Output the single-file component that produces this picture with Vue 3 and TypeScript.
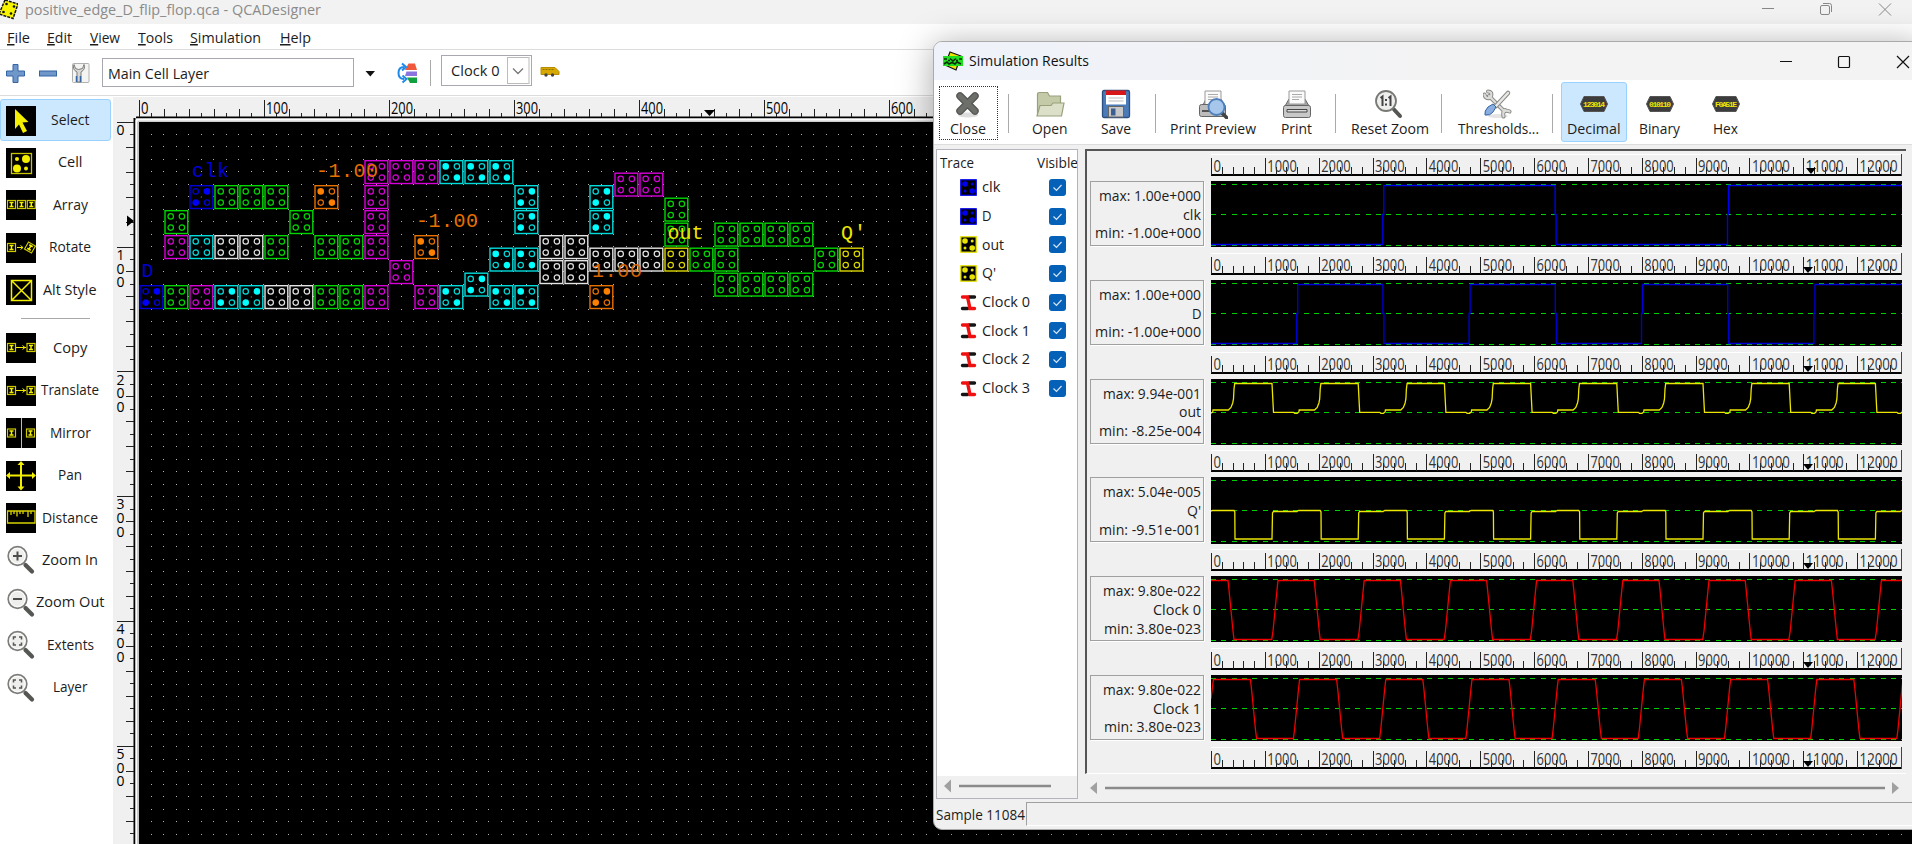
<script setup lang="ts">
import { h } from 'vue'

interface FitProps { t: string; w: number; s?: number; c?: string; u?: boolean }

const Fit = (p: FitProps) =>
  h('svg', { class: 'fit', width: p.w, height: 20 }, [
    h('text', {
      x: 0, y: 15, textLength: p.w, lengthAdjust: 'spacingAndGlyphs',
      fill: p.c || '#1c1c1c', 'font-size': p.s || 15,
    }, p.u ? [h('tspan', { 'text-decoration': 'underline' }, p.t[0]), p.t.slice(1)] : p.t),
  ])
Fit.props = ['t', 'w', 's', 'c', 'u']

const menus = [
  { t: 'File', w: 23, x: 17 }, { t: 'Edit', w: 25, x: 18 }, { t: 'View', w: 30, x: 18 },
  { t: 'Tools', w: 35, x: 17 }, { t: 'Simulation', w: 71, x: 18.5 }, { t: 'Help', w: 31, x: 0 },
]

const Y = '#f4ee00'
const mini = (x: number, y: number) =>
  `<rect x="${x}" y="${y}" width="8" height="8" fill="none" stroke="#cfca00" stroke-width="1.2"/><path d="M${x + 2} ${y + 2}h4M${x + 2} ${y + 6}h4M${x + 4} ${y + 2}v4" stroke="${Y}" stroke-width="1.5"/>`
const sq = (s: string) => `<rect width="30" height="30" fill="#000"/>${s}`
const lens = (s: string) =>
  `<path d="M19.5 20l6.500 6.500" stroke="#555753" stroke-width="4.200" stroke-linecap="round"/><circle cx="11.500" cy="11" r="9.300" fill="#eeeeec" stroke="#7c7e7a" stroke-width="1.700"/><circle cx="11.500" cy="11" r="7.600" fill="none" stroke="#fff"/>${s}`
const corners = '<path d="M7.500 9.500V7h2.500M13 7h2.500v2.500M15.500 12.500V15H13M10 15H7.500v-2.500" fill="none" stroke="#555753" stroke-width="1.500"/>'

const tools = [
  { t: 'Select', w: 38.5, on: true, i: sq(`<path d="M9 3l13.500 13-6 .5 4.500 8.500-4 2-4-8.500-4 4.500z" fill="${Y}"/>`) },
  { t: 'Cell', w: 24.5, i: sq(`<rect x="5.500" y="5.500" width="20" height="20" fill="none" stroke="#c9c400" stroke-width="1.300"/><g fill="${Y}"><circle cx="11" cy="11" r="2"/><circle cx="20" cy="11" r="4"/><circle cx="11" cy="20.500" r="4"/><circle cx="20" cy="20.500" r="2"/></g>`) },
  { t: 'Array', w: 35, i: sq(mini(1.5, 10.5) + mini(11.5, 10.5) + mini(21.3, 10.5)) },
  { t: 'Rotate', w: 42, i: sq(mini(1.5, 10.5) + `<path d="M11 14.500h6M14.500 12.500l2.500 2-2.500 2" stroke="${Y}" fill="none"/><g transform="rotate(30 24 14.500)">${mini(20, 10.5)}</g>`) },
  { t: 'Alt Style', w: 53.5, i: sq(`<path d="M5.500 5.500h20v20h-20zl20 20M25.500 5.500l-20 20" fill="none" stroke="${Y}" stroke-width="1.500"/>`) },
  { t: '', w: 0, sep: true, i: '' },
  { t: 'Copy', w: 34.5, i: sq(mini(1.5, 10.5) + mini(21, 10.5) + `<path d="M10 14.500h10M16.500 12.500l2.500 2-2.500 2" stroke="${Y}" fill="none"/>`) },
  { t: 'Translate', w: 58, i: sq(mini(1.5, 10.5) + mini(21, 10.5) + `<path d="M10 14.500h10M16.500 12.500l2.500 2-2.500 2" stroke="${Y}" fill="none"/>`) },
  { t: 'Mirror', w: 41, i: sq(mini(1.5, 11) + mini(20.5, 11) + `<path d="M15.500 0v30" stroke="#d8d200"/>`) },
  { t: 'Pan', w: 24, i: sq(`<path d="M15 3v24M2 14.500h26" stroke="${Y}" stroke-width="2"/><path d="M15 0l3.500 4h-7zM15 29.500l3.500-4h-7zM0 14.500l4-3.500v7zM30 14.500l-4-3.500v7z" fill="${Y}"/>`) },
  { t: 'Distance', w: 56, i: sq(`<path d="M1.500 8h27.500v12H1.500zM5 8v4M8 8v3M11 8v5.500M14 8v3M17 8v3M22 8v6M25 8v3" fill="none" stroke="#d8d200" stroke-width="1.300"/>`) },
  { t: 'Zoom In', w: 56, i: lens('<path d="M11.500 6.500v9M7 11h9" stroke="#4c4e4a" stroke-width="2"/>') },
  { t: 'Zoom Out', w: 68.5, i: lens('<path d="M7 11h9" stroke="#4c4e4a" stroke-width="2"/>') },
  { t: 'Extents', w: 47, i: lens(corners) },
  { t: 'Layer', w: 34.5, i: lens(corners) },
]

/* Design canvas: cell positions are in half-cell grid units */
const G = '#00d800', M = '#d800d8', C = '#00dcdc', W = '#e4e4e4', O = '#e87000', B = '#0000d8', L = '#dcd800'
type Cell = { x: number; y: number; c: string; p: number }
const row = (y: number, c: string, xs: number[], p = 0): Cell[] => xs.map((x) => ({ x, y, c, p }))
const cells: Cell[] = [
  ...row(3, M, [18, 20, 22]), ...row(3, C, [24, 26, 28], 1),
  ...row(4, M, [38, 40]),
  ...row(5, B, [4], 2), ...row(5, G, [6, 8, 10]), ...row(5, O, [14], 1), ...row(5, M, [18]), ...row(5, C, [30, 36], 2),
  ...row(6, G, [42]),
  ...row(7, G, [2, 12]), ...row(7, M, [18]), ...row(7, C, [30, 36], 2),
  ...row(8, G, [42, 46, 48, 50, 52]),
  ...row(9, M, [2, 18]), ...row(9, C, [4]), ...row(9, W, [6, 8, 32, 34]), ...row(9, G, [10, 14, 16]), ...row(9, O, [22], 1),
  ...row(10, C, [28, 30], 1), ...row(10, W, [36, 38, 40]), ...row(10, L, [42, 56]), ...row(10, G, [44, 46, 54]),
  ...row(11, M, [20]), ...row(11, W, [32, 34]),
  ...row(12, C, [26], 2), ...row(12, G, [46, 48, 50, 52]),
  ...row(13, B, [0], 2), ...row(13, G, [2, 14, 16]), ...row(13, M, [4, 18, 22]), ...row(13, C, [6, 8], 2),
  ...row(13, W, [10, 12]), ...row(13, C, [24, 28, 30], 1), ...row(13, O, [36], 2),
]
const bright: Record<string, string> = { [G]: '#00d800', [M]: '#e000e0', [C]: '#00ffff', [W]: '#fff', [O]: '#ff8000', [B]: '#0000ff', [L]: '#e8e400' }
const quad = [[-5.6, -5.6, 1], [5.6, -5.6, 2], [-5.6, 5.6, 2], [5.6, 5.6, 1]]
const labels = [
  { t: 'clk', x: 53, y: 54.5, c: '#0000d0', w: 37 },
  { t: 'D', x: 2.5, y: 154.5, c: '#0000d0', w: 12 },
  { t: '-1.00', x: 177, y: 54.5, c: '#e87000', w: 62 },
  { t: '-1.00', x: 277, y: 104.5, c: '#e87000', w: 62 },
  { t: '1.00', x: 453, y: 154.5, c: '#d86400', w: 50 },
  { t: 'out', x: 528.5, y: 117, c: '#ece600', w: 36 },
  { t: "Q'", x: 702, y: 117, c: '#ece600', w: 25 },
]
const range = (n: number) => Array.from({ length: n }, (_, i) => i)
const hTicks = range(64).map((i) => ({ x: 26 + i * 12.5, y: i % 10 === 0 ? 3 : i % 2 === 0 ? 12 : 16 }))
const vTicks = range(58).map((i) => ({ y: i * 12.48 + 0.2, x: i % 10 === 0 ? 4 : i % 2 === 0 ? 13 : 17 }))
const vNums = range(6).flatMap((n) => String(n * 100).split('').map((d, k) => ({ d, y: n * 124.8 + 13 + k * 13.7 })))

/* Results window */
const acts = [
  { t: 'Close', w: 36, bw: 59, k: 'focus', i: '<ellipse cx="15" cy="26" rx="10" ry="2.500" fill="#ddd"/><path d="M7 7l15 15M22 7L7 22" stroke="#555753" stroke-width="7.500" stroke-linecap="round"/><path d="M7 7l15 15M22 7L7 22" stroke="#6d6f6b" stroke-width="5" stroke-linecap="round"/>' },
  { sep: 21 },
  { t: 'Open', w: 35.5, bw: 62, i: '<path d="M2.500 26V5.500q0-2 2-2h8l2 3.500h11v19z" fill="#c4caa8" stroke="#98a07c" stroke-width="1.200"/><path d="M2 27l3-10.500h11l2-2.500h11l-2.500 13z" fill="#dce0c8" stroke="#98a07c" stroke-width="1.200"/>' },
  { t: 'Save', w: 30, bw: 70, i: '<rect x="1.500" y="1.500" width="27" height="27" rx="1.500" fill="#4a7ab8" stroke="#2c4f82" stroke-width="1.300"/><rect x="5" y="2" width="20" height="13.500" fill="#fff"/><rect x="5" y="1.500" width="20" height="4.500" fill="#d81818"/><path d="M7.500 9h15M7.500 12h15" stroke="#bbb"/><rect x="7.500" y="17.500" width="15" height="10.500" fill="#c8c8c8" stroke="#666"/><rect x="10" y="19.500" width="4.500" height="7" fill="#3a5f92"/>' },
  { sep: 10 },
  { t: 'Print Preview', w: 86, bw: 105, i: '<path d="M5 16l3-6h15l3 6z" fill="#aaa" stroke="#666"/><path d="M7 2h16v14H7z" fill="#fafafa" stroke="#999"/><path d="M10 5.500h10M10 8h10M10 10.500h7" stroke="#aaa"/><rect x="1.500" y="15.500" width="26" height="12" rx="2" fill="#bdbdbd" stroke="#666"/><path d="M4 22h20" stroke="#555" stroke-width="2"/><path d="M24 24l5 5" stroke="#444" stroke-width="3.500" stroke-linecap="round"/><circle cx="18.500" cy="18" r="8" fill="#a6c6ec" stroke="#4e7fba" stroke-width="1.800"/>' },
  { t: 'Print', w: 31, bw: 62, i: '<path d="M3 17l4-7h16l4 7z" fill="#a5a5a5" stroke="#666"/><path d="M7 2h16v13H7z" fill="#fafafa" stroke="#999"/><path d="M10 5.500h10M10 8h10M10 10.500h7" stroke="#aaa"/><rect x="1.500" y="16.500" width="27" height="12" rx="2" fill="#c8c8c8" stroke="#666"/><path d="M5 20.500h20v2.500H5z" fill="#ddd" stroke="#444"/>' },
  { sep: 16 },
  { t: 'Reset Zoom', w: 78, bw: 92, i: '<g transform="translate(-1 1)"><path d="M20 19.500l6 6.500" stroke="#555753" stroke-width="4" stroke-linecap="round"/><circle cx="12" cy="11" r="10" fill="#eeeeec" stroke="#777975" stroke-width="1.800"/><path d="M6.500 8l2-1.500V16M14.500 8l2-1.500V16M12 9v2M12 13.500v2" fill="none" stroke="#444" stroke-width="2"/></g>' },
  { sep: 12 },
  { t: 'Thresholds...', w: 81, bw: 101, i: '<g transform="translate(-1 0)"><ellipse cx="16" cy="27" rx="10" ry="2" fill="#e4e4e4"/><path d="M7 7l15 15M2.500 5.500q1 4.500 5 3.500M6 2.500q4.500 0 3 5M21.500 27.500q-1-5 1.500-6.500M27.500 22.500q-4-2-6 1" fill="none" stroke="#888a85" stroke-width="4" stroke-linecap="round"/><path d="M7 7l15 15M2.500 5.500q1 4.500 5 3.500M6 2.500q4.500 0 3 5M21.500 27.500q-1-5 1.500-6.500M27.500 22.500q-4-2-6 1" fill="none" stroke="#dcdcda" stroke-width="2.200" stroke-linecap="round"/><path d="M14 17L26 4" stroke="#888a85" stroke-width="4.500" stroke-linecap="round"/><path d="M14 17L26 4" stroke="#e8e8e6" stroke-width="2.500" stroke-linecap="round"/><path d="M3 26q-1-4 3-8l5-3 3 3-3 5q-3 4-8 3z" fill="#8aaee0" stroke="#3465a4"/></g>' },
  { sep: 7 },
  { t: 'Decimal', w: 53.5, bw: 66, k: 'on', n: '123014' },
  { t: 'Binary', w: 41, bw: 66, n: '010110' },
  { t: 'Hex', w: 25, bw: 66, n: 'F0A51E' },
] as { t?: string; w?: number; bw?: number; k?: string; i?: string; n?: string; sep?: number }[]

const traces = [
  { t: 'clk', w: 18.5, c: '#0000f0' }, { t: 'D', w: 9.5, c: '#0000f0' }, { t: 'out', w: 22, c: '#e8e400' }, { t: "Q'", w: 14, c: '#e8e400' },
  { t: 'Clock 0', w: 48, c: '' }, { t: 'Clock 1', w: 48, c: '' }, { t: 'Clock 2', w: 48, c: '' }, { t: 'Clock 3', w: 48, c: '' },
]

const P = 86.2
const square = (xs: number[]) => {
  let hi = false
  let d = 'M0 63.500'
  for (const x of xs) {
    d += `H${x - 0.5}V33.500H${x + 0.5}V${hi ? 63.5 : 4.5}`
    hi = !hi
  }
  return d + 'H691'
}
const repeat = (pts: number[][], pre = '') => {
  let d = pre
  for (let k = 0; k < 9; k++) for (const [x, y] of pts) d += `${d ? 'L' : 'M'}${(x + k * P).toFixed(1)} ${y}`
  return d
}
const outPath = repeat([[0, 34.3], [1.7, 33], [2, 31], [17.3, 31], [20, 28.5], [21.7, 24], [22.5, 20], [23, 10], [23.7, 4.5], [61, 4.5], [61.5, 14], [62, 24], [62.5, 33.3], [82.5, 33.3], [83.7, 34.3]])
const qPath = repeat([[0, 34.3], [1.5, 33.5], [23, 33.5], [23.8, 35], [24, 62], [61, 62], [61.5, 36], [62.5, 34.5], [86, 34.5]])
const c0Path = repeat([[17, 4.5], [18, 14], [22, 55], [23, 63.5], [60.7, 63.5], [62, 55], [66, 14], [67, 4.5]], 'M0 4.500')
const c1Path = repeat([[2.4, 4.5], [39.4, 4.5], [40.5, 14], [44.5, 55], [45.6, 63.5], [82.4, 63.5], [83.5, 55], [87.5, 14]], 'M0 24')

const plots = [
  { max: '1.00e+000', n: 'clk', nw: 18, min: '-1.00e+000', c: '#0000f0', d: square([172.3, 344.6, 517]), w: [102, 106] },
  { max: '1.00e+000', n: 'D', nw: 9.5, min: '-1.00e+000', c: '#0000d8', d: square([1, 2, 3, 4, 5, 6, 7].map((k) => k * P)), w: [102, 106] },
  { max: '9.94e-001', n: 'out', nw: 22, min: '-8.25e-004', c: '#ece600', d: outPath, w: [98, 102] },
  { max: '5.04e-005', n: "Q'", nw: 14, min: '-9.51e-001', c: '#ece600', d: qPath, w: [98, 102] },
  { max: '9.80e-022', n: 'Clock 0', nw: 48, min: '3.80e-023', c: '#f00000', d: c0Path, w: [98, 97] },
  { max: '9.80e-022', n: 'Clock 1', nw: 48, min: '3.80e-023', c: '#f00000', d: c1Path, w: [98, 97] },
]
const rulers = range(7)
const majors = range(13).map((n) => ({ x: n * 53.84 + 0.5, t: String(n * 1000), w: n === 0 ? 7.5 : n < 10 ? 29.5 : 38 }))
const minors = range(65).filter((n) => n % 5 && n < 64).map((n) => n * 10.77 + 0.5)
</script>

<template>
  <div class="app">
    <header class="title">
      <svg class="logo" width="18" height="20" viewBox="0 0 18 20"><path d="M5 0l13 4-5 14.500L-1 14z" fill="#f8f400" stroke="#111" stroke-width="1.500" stroke-dasharray="3 1" /><g fill="#111"><circle cx="6.500" cy="4" r="1.300" /><circle cx="14" cy="6.500" r="1.300" /><circle cx="3.500" cy="12" r="1.300" /><circle cx="11" cy="13.500" r="1.300" /></g></svg>
      <Fit t="positive_edge_D_flip_flop.qca - QCADesigner" :w="296" c="#8b8b8b" />
      <svg class="sys" width="132" height="20" viewBox="0 0 132 20" fill="none" stroke="#888"><path d="M0 8.500h12M117 3.500l12 12M129 3.500l-12 12" /><rect x="58.500" y="5.500" width="9" height="9" rx="1.500" /><path d="M61 3.500h6.500q2 0 2 2V12" /></svg>
    </header>
    <nav class="menu">
      <span v-for="m in menus" :key="m.t" :style="{ marginRight: m.x + 'px' }"><Fit :t="m.t" :w="m.w" :u="true" /></span>
    </nav>
    <div class="bar">
      <svg width="102" height="40" viewBox="0 0 102 40"><path d="M13 11.500h5v6.500h6.500v5H18v6.500h-5V23H6.500v-5H13z" fill="#6f97c9" stroke="#3465a4" /><rect x="39.500" y="18" width="17" height="5" fill="#6f97c9" stroke="#3465a4" /><rect x="72.500" y="10.500" width="16.500" height="19" rx="1" fill="#f4f4f2" stroke="#b0b0ae" /><path d="M74 11.500q-2 5 3 7.500v10h4V19q5-3 3-7.500l-1.500 4-4 1-3-1z" fill="#d8d8d6" stroke="#7c7e7a" /><path d="M76.500 23v6M80.500 23v6" stroke="#3465a4" stroke-width="1.500" /></svg>
      <div class="combo"><Fit t="Main Cell Layer" :w="101" /></div>
      <svg width="76" height="40" viewBox="0 0 76 40"><path d="M11.500 18h9.500l-4.700 5.500z" fill="#111" /><path d="M52.500 18.500h10.500v4.500H51z" fill="#8a74e0" /><path d="M54.500 10.500H61l2 6.500H51z" fill="#f0583c" /><path d="M53 24.500h10v5.500H56z" fill="#10a040" /><path d="M50 14q-5.500 0-5.500 6t5.500 6M48 10.500l4 3.500-4 3.500M48.500 22.500l4 3.500-4 3.500" fill="none" stroke="#1e8ae8" stroke-width="2" /></svg>
      <i class="vsep"></i>
      <div class="clock"><Fit t="Clock 0" :w="48.5" /><div class="drop"><svg width="12" height="8"><path d="M1 1.500l5 5 5-5" fill="none" stroke="#777" stroke-width="1.300" /></svg></div></div>
      <svg class="bus" width="20" height="12" viewBox="0 0 20 12"><path d="M1 1.500h14l4 4V8.500H1z" fill="#d6a800" stroke="#b88c00" /><path d="M2.500 3.500h12" stroke="#927000" stroke-dasharray="2 1" /><circle cx="6" cy="9" r="1.700" fill="#444" /><circle cx="12.500" cy="9" r="1.700" fill="#444" /></svg>
    </div>
    <div class="body">
      <aside class="tools">
        <template v-for="(t, i) in tools" :key="i">
          <hr v-if="t.sep" />
          <div v-else class="tool" :class="{ on: t.on }">
            <svg width="30" height="30" viewBox="0 0 30 30" v-html="t.i"></svg>
            <div class="lab"><Fit :t="t.t" :w="t.w" /></div>
          </div>
        </template>
      </aside>
      <main class="work">
        <svg class="hr" width="1798" height="25">
          <path d="M23 20.500H1798" stroke="#000" stroke-width="2" /><path d="M24 24H1798" stroke="#aaa" stroke-width="1" /><path d="M23 22.500H1798" stroke="#fff" stroke-width="2" />
          <path v-for="t in hTicks" :key="t.x" class="crisp" :d="`M${t.x} ${t.y}V20`" stroke="#222" />
          <text v-for="n in 7" :key="n" :x="n * 125 - 97" y="17" font-size="15.500" :textLength="n === 1 ? 7.500 : 22" lengthAdjust="spacingAndGlyphs">{{ (n - 1) * 100 }}</text>
          <path d="M591 13h11l-5.500 6z" />
        </svg>
        <div class="lower">
          <svg class="vr" width="26" height="722">
            <path d="M21.500 -4V722" stroke="#000" stroke-width="2" /><path d="M23.500 -2V722" stroke="#fff" stroke-width="2" /><path d="M25 0V722" stroke="#999" />
            <path v-for="t in vTicks" :key="t.y" class="crisp" :d="`M${t.x} ${t.y}H21`" stroke="#222" />
            <text v-for="(n, i) in vNums" :key="i" x="3.500" :y="n.y" font-size="15" textLength="8" lengthAdjust="spacingAndGlyphs">{{ n.d }}</text>
            <path d="M14 93.500l7 5.500-7 5.500z" />
          </svg>
          <svg class="canvas" width="1773" height="722">
            <path v-for="n in 58" :key="n" class="crisp" :d="`M11.900 ${n * 12.5 - 0.1}H1773`" stroke="#b4b4b4" stroke-dasharray="1 11.500" />
            <g v-for="(c, i) in cells" :key="i" :transform="`translate(${c.x * 12.5 + 12.3} ${c.y * 12.5 + 12.5})`" :stroke="c.c">
              <rect x="-11.300" y="-11.300" width="22.800" height="22.800" fill="#000" stroke-width="1.400" />
              <path d="M-.5 0h1" stroke="#999" />
              <circle v-for="q in quad" :key="q.join()" :cx="q[0]" :cy="q[1]" r="2.700" stroke-width="1.200" :stroke="q[2] === c.p ? bright[c.c] : c.c" :fill="q[2] === c.p ? bright[c.c] : 'none'" />
            </g>
            <text v-for="(l, i) in labels" :key="'l' + i" class="mono" :x="l.x" :y="l.y" :fill="l.c" :textLength="l.w">{{ l.t }}</text>
          </svg>
        </div>
      </main>
    </div>

    <section class="win">
      <header class="wtitle">
        <svg width="20" height="20" viewBox="0 0 20 20"><path d="M7 1l11 4-5 14-11-5z" fill="#e8e400" stroke="#111" stroke-width="1.200" /><rect y="5" width="20" height="10" fill="#20e020" /><path d="M1 8h3M7 7.500l3 2.500 3-2.500M16 8h3M5 9.500h2M13 9.500h2M1 13l3-2 2 2 3-1.500 3 1.500 2-2 4 2" fill="none" stroke="#0a2a0a" stroke-width="1.600" /></svg>
        <Fit t="Simulation Results" :w="120" c="#111" />
        <svg class="wsys" width="132" height="20" fill="none" stroke="#111" stroke-width="1.200"><path d="M0 10.500h12M117 5l12 12M129 5l-12 12" /><rect x="58.500" y="5.500" width="11" height="11" rx="1" /></svg>
      </header>
      <div class="acts">
        <template v-for="(a, i) in acts" :key="i">
          <div v-if="a.sep" class="asep" :style="{ width: a.sep + 'px' }"></div>
          <div v-else class="act" :class="a.k" :style="{ width: a.bw + 'px' }">
            <svg v-if="a.i" width="30" height="30" viewBox="0 0 30 30" v-html="a.i"></svg>
            <svg v-else width="30" height="30"><path d="M5 7.500h20l3.500 7.500-3.500 7.500H5L1.500 15z" fill="#3c3c3c" stroke="#555" /><text x="4" y="18" textLength="22" class="chip">{{ a.n }}</text></svg>
            <Fit :t="a.t!" :w="a.w!" />
          </div>
        </template>
      </div>
      <div class="panes">
        <div class="tree">
          <div class="thead"><Fit t="Trace" :w="34" /><i></i><Fit t="Visible" :w="41" /></div>
          <div v-for="t in traces" :key="t.t" class="trow">
            <svg v-if="t.c" width="17" height="17"><rect x=".8" y=".8" width="15.400" height="15.400" :stroke="t.c" stroke-width="1.300" /><g :fill="t.c"><circle cx="5" cy="5" r="2.800" /><circle cx="12.200" cy="12" r="2.800" /><circle cx="12.200" cy="5" r="1.500" /><circle cx="5" cy="12" r="1.500" /></g></svg>
            <svg v-else width="17" height="17" fill="none" stroke-width="3.400" stroke-linecap="round"><path d="M9 3h5.500M2.500 14.500h5" stroke="#151515" /><path d="M2.500 3h5l2.500 11.500h4.500" stroke="#f01010" /></svg>
            <Fit :t="t.t" :w="t.w" />
            <span class="chk"><svg width="17" height="17"><path d="M4.500 8.500l3 3 5-5.500" fill="none" stroke="#d6e6f6" stroke-width="1.200" /></svg></span>
          </div>
          <svg class="tscroll" width="140" height="22"><path d="M14 3.500v13l-7-6.500z" fill="#a0a0a0" /><path d="M22 10h92" stroke="#8a8a8a" stroke-width="2.500" /></svg>
        </div>
        <div class="view">
          <div class="plots">
            <template v-for="r in rulers" :key="r">
              <svg class="ruler" width="691" height="27">
                <path d="M0 .5H691" stroke="#fff" />
                <path d="M0 21H691" stroke="#000" stroke-width="2" />
                <path v-for="x in minors" :key="x" class="crisp" :d="`M${x.toFixed(1)} 13V21`" stroke="#222" />
                <g v-for="m in majors" :key="m.x"><path class="crisp" :d="`M${m.x} 4V21`" stroke="#222" /><text :x="m.x + 2" y="17.500" font-size="15.500" :textLength="m.w" lengthAdjust="spacingAndGlyphs">{{ m.t }}</text></g>
                <path d="M690.500 0V22" stroke="#444" />
                <path :d="`M${r ? 592 : 595} 14h10l-5 6z`" />
              </svg>
              <div v-if="r < 6" class="prow">
                <div class="info">
                  <Fit :t="'max: ' + plots[r].max" :w="plots[r].w[0]" />
                  <Fit :t="plots[r].n" :w="plots[r].nw" />
                  <Fit :t="'min: ' + plots[r].min" :w="plots[r].w[1]" />
                </div>
                <svg class="plot" width="691" height="66.300" fill="none">
                  <path class="crisp" d="M0 3.500H691M0 33.500H691M0 64.500H691" stroke="#00d000" stroke-dasharray="5 5.300" />
                  <path :d="plots[r].d" :stroke="plots[r].c" stroke-width="1.300" />
                </svg>
              </div>
            </template>
          </div>
          <svg class="vscroll" width="824" height="21"><path d="M12 4v12l-7-6zM807 4v12l7-6z" fill="#a0a0a0" /><path d="M20 10h780" stroke="#8a8a8a" stroke-width="2.500" /></svg>
        </div>
      </div>
      <footer class="status"><Fit t="Sample 11084" :w="89" /><div></div></footer>
    </section>
  </div>
</template>

<style>
body { margin: 0; overflow: hidden; background: #fff; }
.fit { display: block; flex: none; overflow: visible; }
svg text { font-family: "Open Sans", "Noto Sans", sans-serif; }
svg text.mono { font-family: "Liberation Mono", monospace; font-size: 20px; }
svg text.chip { font-family: "Liberation Mono", monospace; font-size: 8px; font-weight: 700; fill: #ece600; }
.crisp { shape-rendering: crispEdges; }
</style>
<style scoped>
.app { position: relative; width: 1912px; height: 844px; overflow: hidden; font-family: "Open Sans", sans-serif; background: #fff; display: flex; flex-direction: column; }
svg { display: block; flex: none; }
.title { height: 24px; background: #f2f2f2; display: flex; }
.logo { margin-right: 6.500px; }
.sys { margin-left: auto; margin-right: 18px; }
.menu { height: 26px; border-bottom: 1px solid #dcdcdc; display: flex; padding: 4px 0 0 7px; box-sizing: border-box; }
.bar { height: 46px; display: flex; align-items: center; border-bottom: 1px solid #dcdcdc; box-sizing: border-box; }
.combo { width: 252px; height: 29px; box-sizing: border-box; border: 1px solid #a8a8b0; padding: 5px 0 0 5px; }
.vsep { width: 1px; height: 26px; background: #aaa; margin-right: 10px; }
.clock { width: 91px; height: 31px; border: 1px solid #a8a8b0; box-sizing: border-box; display: flex; padding: 0 1px 0 9px; align-items: center; justify-content: space-between; margin-top: -4px; }
.drop { width: 23px; height: 27px; border: 1px solid #bbb; border-right: 2px solid #ddd; box-sizing: border-box; display: flex; align-items: center; justify-content: center; }
.bus { margin-left: 8px; margin-top: -1px; }
.body { flex: 1; display: flex; min-height: 0; }
.tools { width: 113px; flex: none; padding-top: 3px; box-sizing: border-box; }
.tool { height: 42.400px; width: 111px; box-sizing: border-box; padding: 5.500px 0 0 5px; display: flex; border: 1px solid transparent; border-radius: 3px; background-clip: padding-box; }
.tool.on { background: #cce8ff; border-color: #99d1ff; }
.lab { width: 68px; display: flex; justify-content: center; padding-top: 4.500px; }
hr { width: 69px; height: 1px; border: 0; background: #a8a8a8; margin: 7px 0 8px 21px; }
.work { flex: none; width: 1799px; margin-top: 1px; background: #f0f0f0; }
.lower { display: flex; }
.vr, .hr { overflow: visible; }
.canvas { background: #000; }
.win { position: absolute; left: 933px; top: 41px; width: 990px; height: 789px; background: #f0f0f0; border: 1px solid #aaa; border-radius: 9px; box-sizing: border-box; box-shadow: 0 4px 34px rgba(0, 0, 0, .34); overflow: hidden; display: flex; flex-direction: column; }
.wtitle { height: 38px; background: linear-gradient(90deg, #eff2fa, #f3f3f3 55%); display: flex; align-items: center; padding-left: 9px; }
.wtitle .fit { margin-left: 6px; margin-top: -1px; }
.wsys { margin-left: 691px; margin-top: -1px; }
.acts { height: 65px; background: #fff; display: flex; border-bottom: 1px solid #ddd; box-sizing: border-box; padding: 2px 0 0 4.500px; }
.asep { height: 39px; margin-top: 12px; background: linear-gradient(#aaa, #aaa) center / 1px 100% no-repeat; }
.act { height: 60px; box-sizing: border-box; display: flex; flex-direction: column; align-items: center; border: 1px solid transparent; padding-top: 6px; }
.focus { height: 54px; margin-top: 4px; padding-top: 2px; border: 1px dotted #333; }
.on.act { background: #cce8ff; border-color: #99d1ff; border-radius: 3px; margin-left: 5px; }
.panes { height: 656px; display: flex; padding: 4px 0 0 2px; box-sizing: border-box; }
.tree { width: 142px; height: 650px; border: 1px solid #b4b4bc; background: #fff; box-sizing: border-box; display: flex; flex-direction: column; overflow: hidden; }
.thead { display: flex; height: 20px; padding: 3px 0 0 3px; }
.thead i { width: 1px; height: 22px; background: #e0e0e0; margin: -1px 2px 0 61px; }
.trow { height: 28.700px; display: flex; align-items: center; padding-left: 23px; }
.trow .fit { margin-left: 5px; }
.chk { margin-left: auto; margin-right: 11px; width: 17px; height: 17px; border-radius: 3px; background: #0560b8; }
.tscroll { margin-top: auto; background: #f0f0f0; }
.view { margin-left: 7px; width: 824px; }
.plots { height: 625px; width: 821px; border: 2px solid #555; border-right: 0; border-bottom: 1px solid #fff; box-sizing: border-box; padding: 3px 0 0 3px; }
.ruler { margin-left: 121px; }
.prow { display: flex; height: 71.800px; width: 812px; justify-content: space-between; }
.ruler text { fill: #333; }
.info { width: 114px; height: 65px; border: 1px solid #a0a0a0; box-sizing: border-box; padding: 4px 2px 0 0; display: flex; flex-direction: column; align-items: flex-end; box-shadow: 1px 1px #fff; }
.info .fit { margin-bottom: -1.300px; }
.plot { background: #000; }
.vscroll { margin-top: 4px; }
.status { height: 28px; display: flex; padding-left: 2px; align-items: flex-start; }
.status > .fit { margin-top: 4px; }
.status div { flex: 1; height: 22px; margin-top: 1px; margin-left: 1px; border: 1px solid #a0a0a0; border-right: 0; border-bottom-color: #fff; }
</style>
